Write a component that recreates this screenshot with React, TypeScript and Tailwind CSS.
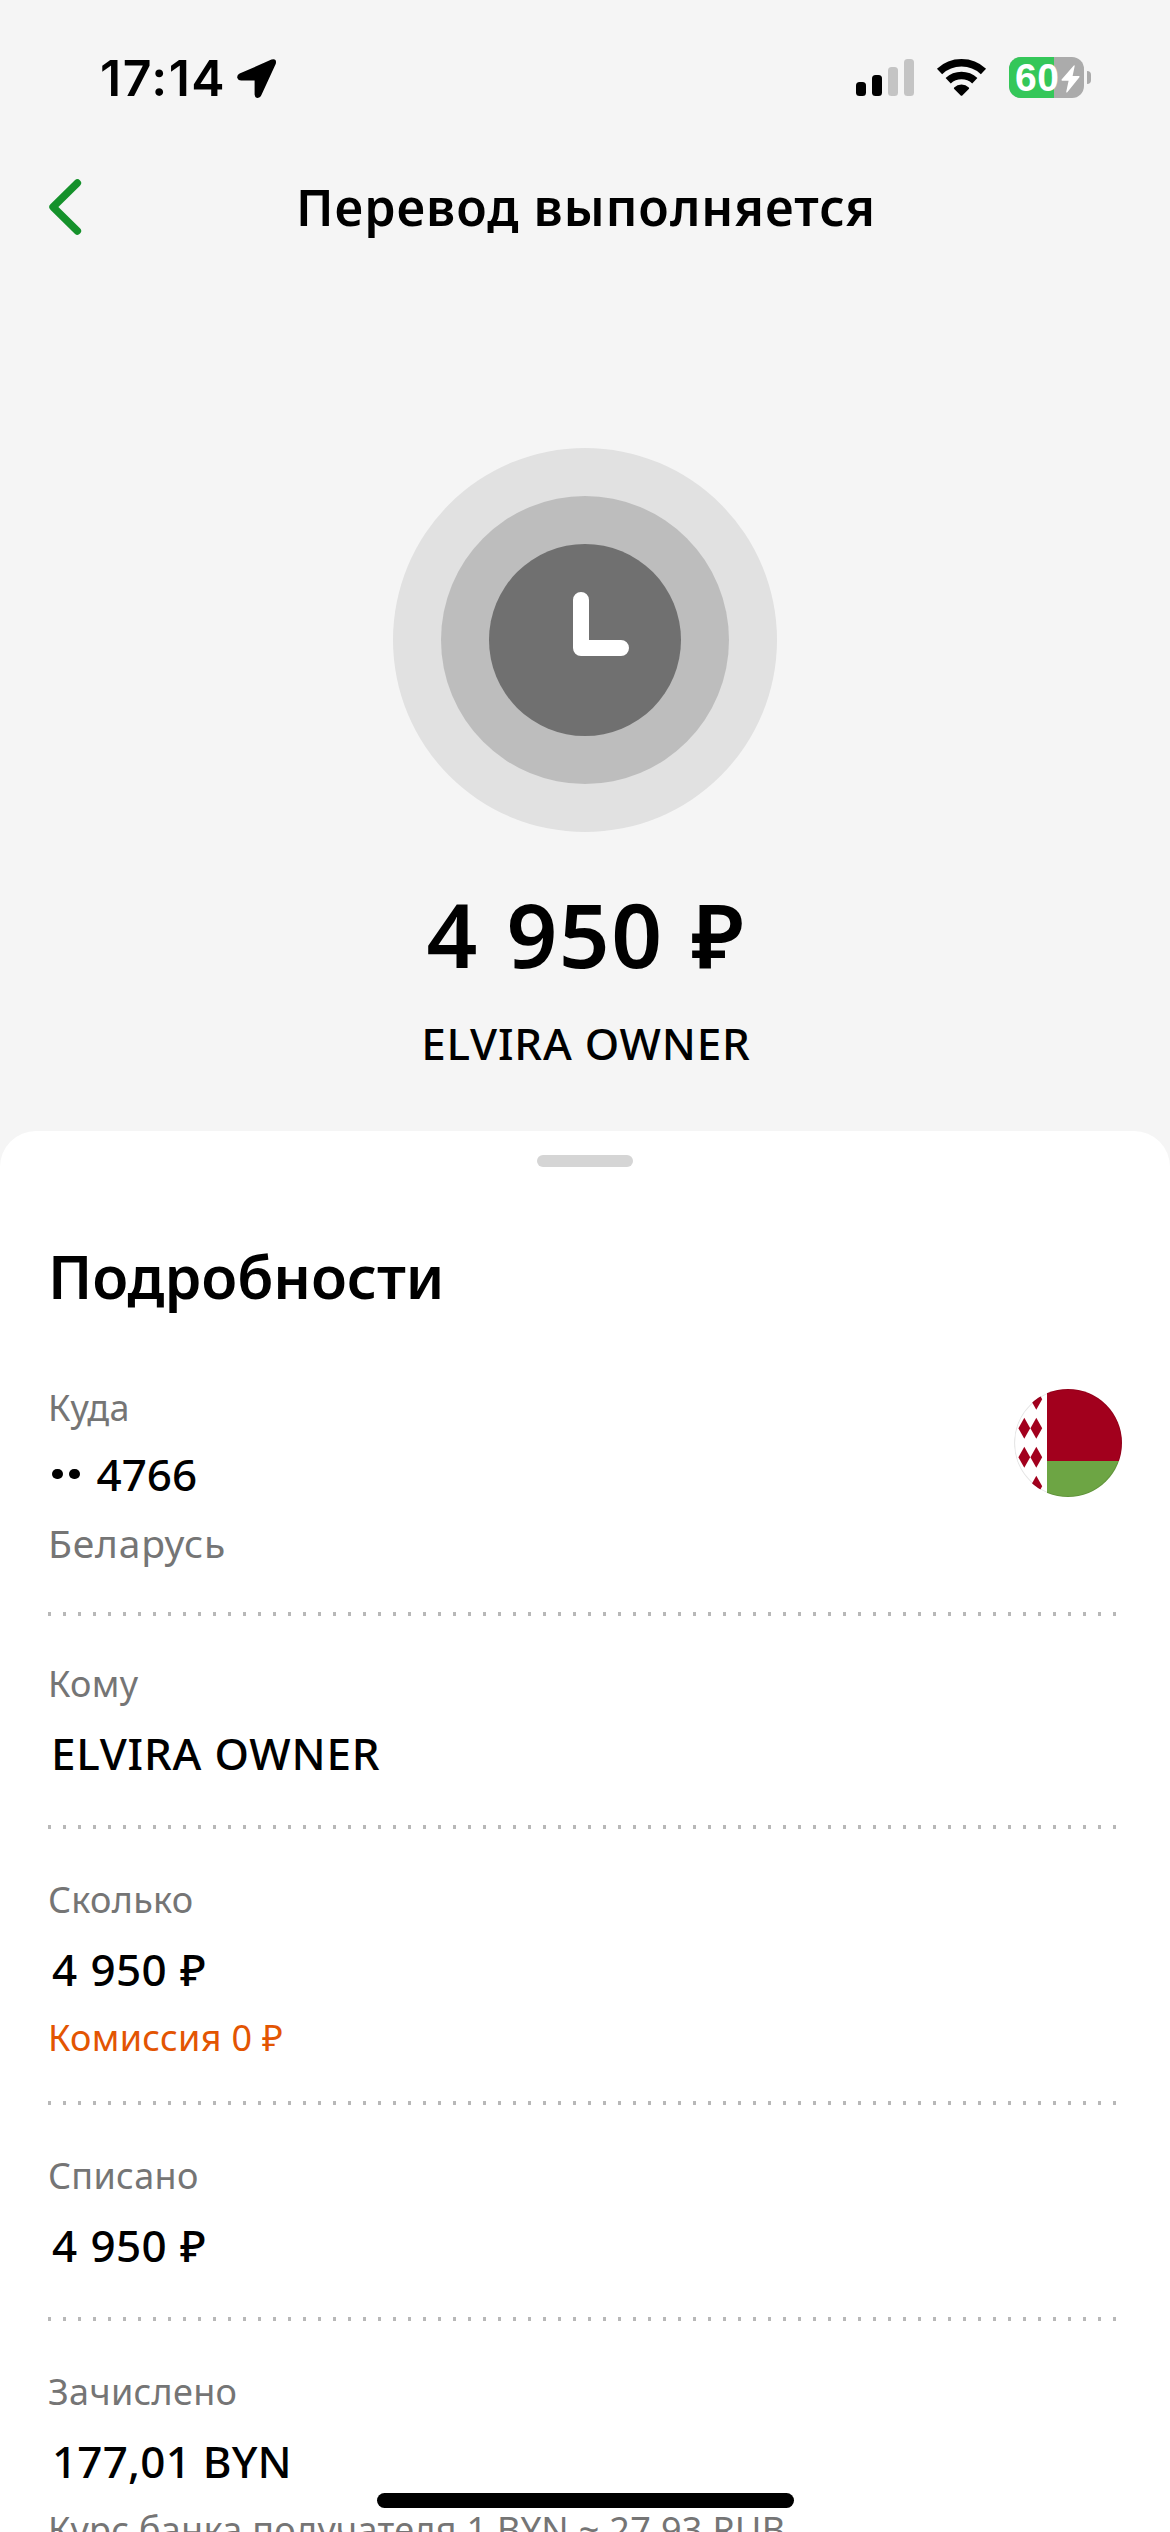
import type { ReactNode } from 'react';

function StatusBar() {
  return (
    <div className="flex h-[132px] items-start justify-between pr-[79px] pl-[100px]">
      <div className="flex pt-12">
        <span className="w-[137px] font-['Inter',sans-serif] text-[50px] leading-[60px] font-semibold tracking-[1.5px]">17:14</span>
        <svg className="mt-[11px] h-[39px] w-10" viewBox="0 0 40 39">
          <path d="M34.5 .6 2.6 14.6Q-.3 16.2.3 19 1.2 21.5 4.2 21.5H17.6V35.5Q18 39 20.8 39 23.2 39 24.3 36.2L38.8 4.8Q40-.9 34.5.6Z" />
        </svg>
      </div>
      <div className="flex pt-[57px]">
        <div className="mt-[2px] flex h-[37px] w-[58px] items-end gap-[6px]">
          <i className="h-[14px] w-[10px] rounded-[3.5px] bg-black" />
          <i className="h-[21px] w-[10px] rounded-[3.5px] bg-black" />
          <i className="h-[29px] w-[10px] rounded-[3.5px] bg-[#c4c4c4]" />
          <i className="h-[37px] w-[10px] rounded-[3.5px] bg-[#c4c4c4]" />
        </div>
        <svg className="mt-[2px] ml-[22px] h-[37px] w-[51px]" viewBox="0 0 51 37">
          <g fill="none" stroke="#000" strokeWidth="7.6">
            <path d="M3.54 12.45A32.2 32.2 0 0 1 47.46 12.45" />
            <path d="M12.2 21.74A19.5 19.5 0 0 1 38.8 21.74" />
          </g>
          <path d="M18.2 28.5A10.3 10.3 0 0 1 32.8 28.5Q33.5 29.3 32.8 30L26.3 36.4Q25.5 37.2 24.7 36.4L18.2 30Q17.5 29.3 18.2 28.5Z" />
        </svg>
        <div className="relative ml-[22px] flex h-[41px] w-[75px] rounded-[12px] bg-[#ababab]">
          <div className="w-[45px] rounded-l-[12px] bg-[#34c759]" />
          <span className="absolute top-0 left-[6px] font-['Liberation_Sans',sans-serif] text-[39px] leading-[42px] font-bold tracking-[0.5px] text-white">60</span>
          <svg className="absolute top-2 left-[52px] h-7 w-[19px]" viewBox="0 0 19 28">
            <path d="M12.8 .6Q14-.2 13.6 1.6L11.6 11H18Q19 11.3 18.2 12.5L6.3 27.3Q5 28 5.3 26.5L7.6 15.7H1Q0 15.3.8 14.3Z" fill="#fff" />
          </svg>
        </div>
        <i className="mt-[14px] ml-[3px] h-[13px] w-1 rounded-r-full bg-[#ababab]" />
      </div>
    </div>
  );
}

function Header() {
  return (
    <header className="relative flex h-[150px] justify-center pt-[45px]">
      <svg className="absolute top-[46px] left-[48px] h-[58px] w-[34px]" viewBox="0 0 34 58">
        <path d="M29.4 5 5 29 29.4 53" fill="none" stroke="#15912b" strokeWidth="7.4" strokeLinecap="round" strokeLinejoin="round" />
      </svg>
      <h1 className="pl-[2px] text-[50px] leading-[60px] font-semibold tracking-[1px]">Перевод выполняется</h1>
    </header>
  );
}

function PendingBadge() {
  return (
    <div className="flex size-96 items-center justify-center rounded-full bg-[#e1e1e1]">
      <div className="flex size-72 items-center justify-center rounded-full bg-[#bdbdbd]">
        <div className="flex size-48 items-center justify-center rounded-full bg-[#707070]">
          <svg className="size-48" viewBox="0 0 192 192">
            <path d="M92 56V104H132" fill="none" stroke="#fff" strokeWidth="16" strokeLinecap="round" strokeLinejoin="round" />
          </svg>
        </div>
      </div>
    </div>
  );
}

function BelarusFlag() {
  const diamonds = [
    [22.3, 10.3],
    [10.3, 39.3],
    [22.3, 39.3],
    [10.3, 68.3],
    [22.3, 68.3],
    [22.3, 97.3],
  ];
  return (
    <svg className="size-[108px]" viewBox="0 0 108 108">
      <defs>
        <clipPath id="flag">
          <circle cx="54" cy="54" r="54" />
        </clipPath>
      </defs>
      <g clipPath="url(#flag)">
        <rect width="108" height="108" fill="#fff" />
        <rect x="33" width="75" height="72" fill="#a2001d" />
        <rect x="33" y="72" width="75" height="36" fill="#6da544" />
        {diamonds.map(([x, y]) => (
          <path key={`${x}-${y}`} transform={`translate(${x} ${y})`} d="M0-10.5 5.9 0 0 10.5-5.9 0Z" fill="#a2001d" />
        ))}
        <circle cx="54" cy="54" r="53.5" fill="none" stroke="#000" strokeOpacity=".1" strokeWidth="1.2" />
      </g>
    </svg>
  );
}

function Label({ children }: { children: ReactNode }) {
  return <p className="text-[36px] leading-[50px] tracking-[0.3px] text-[#757575]">{children}</p>;
}

function Divider() {
  return <div className="h-1 w-[1074px] bg-[repeating-linear-gradient(90deg,#b8b8b8_0_3px,transparent_3px_15px)]" />;
}

export default function App() {
  return (
    <div className="relative h-[2532px] w-[1170px] overflow-hidden bg-[#f5f5f5] font-['Noto_Sans',sans-serif] text-black">
      <StatusBar />
      <Header />
      <section className="flex h-[849px] flex-col items-center pt-[166px]">
        <PendingBadge />
        <p className="mt-[52px] pl-[2px] text-[89px] leading-[100px] font-semibold tracking-[1.5px] whitespace-nowrap [word-spacing:3px]">4 950 ₽</p>
        <p className="mt-[31px] pl-[2px] text-[44px] leading-[56px] font-medium tracking-[0.8px]">ELVIRA OWNER</p>
      </section>

      <main className="h-[1401px] overflow-hidden rounded-t-[36px] bg-white px-12 pt-6">
        <div className="mx-auto h-3 w-24 rounded-full bg-[#d5d5d5]" />
        <h2 className="mt-[69px] text-[59px] leading-[80px] font-semibold tracking-[-0.1px]">Подробности</h2>

        <section className="mt-[67px] flex h-[229px] justify-between">
          <div>
            <Label>Куда</Label>
            <p className="mt-[13px] flex items-center text-[44px] leading-[56px] font-medium">
              <span className="mr-[17px] ml-1 flex gap-[6.5px]">
                <i className="size-[10.5px] rounded-full bg-black" />
                <i className="size-[10.5px] rounded-full bg-black" />
              </span>
              4766
            </p>
            <p className="mt-[15px] text-[39px] leading-[52px] tracking-[0.8px] text-[#757575]">Беларусь</p>
          </div>
          <div className="mt-[6px]">
            <BelarusFlag />
          </div>
        </section>
        <Divider />

        <section className="h-[209px] pt-[43px]">
          <Label>Кому</Label>
          <p className="mt-4 ml-[3px] text-[44px] leading-[56px] font-medium tracking-[0.8px]">ELVIRA OWNER</p>
        </section>
        <Divider />

        <section className="h-[272px] pt-[46px]">
          <Label>Сколько</Label>
          <p className="mt-4 ml-1 text-[44px] leading-[56px] font-medium tracking-[0.4px] [word-spacing:1px]">4 950 ₽</p>
          <p className="mt-4 text-[36px] leading-[50px] tracking-[0.3px] text-[#e35502]">Комиссия 0 ₽</p>
        </section>
        <Divider />

        <section className="h-[212px] pt-[46px]">
          <Label>Списано</Label>
          <p className="mt-4 ml-1 text-[44px] leading-[56px] font-medium tracking-[0.4px] [word-spacing:1px]">4 950 ₽</p>
        </section>
        <Divider />

        <section className="pt-[46px]">
          <Label>Зачислено</Label>
          <p className="mt-4 ml-1 text-[44px] leading-[56px] font-medium tracking-[0.2px]">177,01 BYN</p>
          <div className="mt-4 whitespace-nowrap">
            <Label>Курс банка получателя 1 BYN ~ 27,93 RUB</Label>
          </div>
        </section>
      </main>

      <div className="absolute top-[2493px] left-[377px] h-[15px] w-[417px] rounded-full bg-black" />
    </div>
  );
}
